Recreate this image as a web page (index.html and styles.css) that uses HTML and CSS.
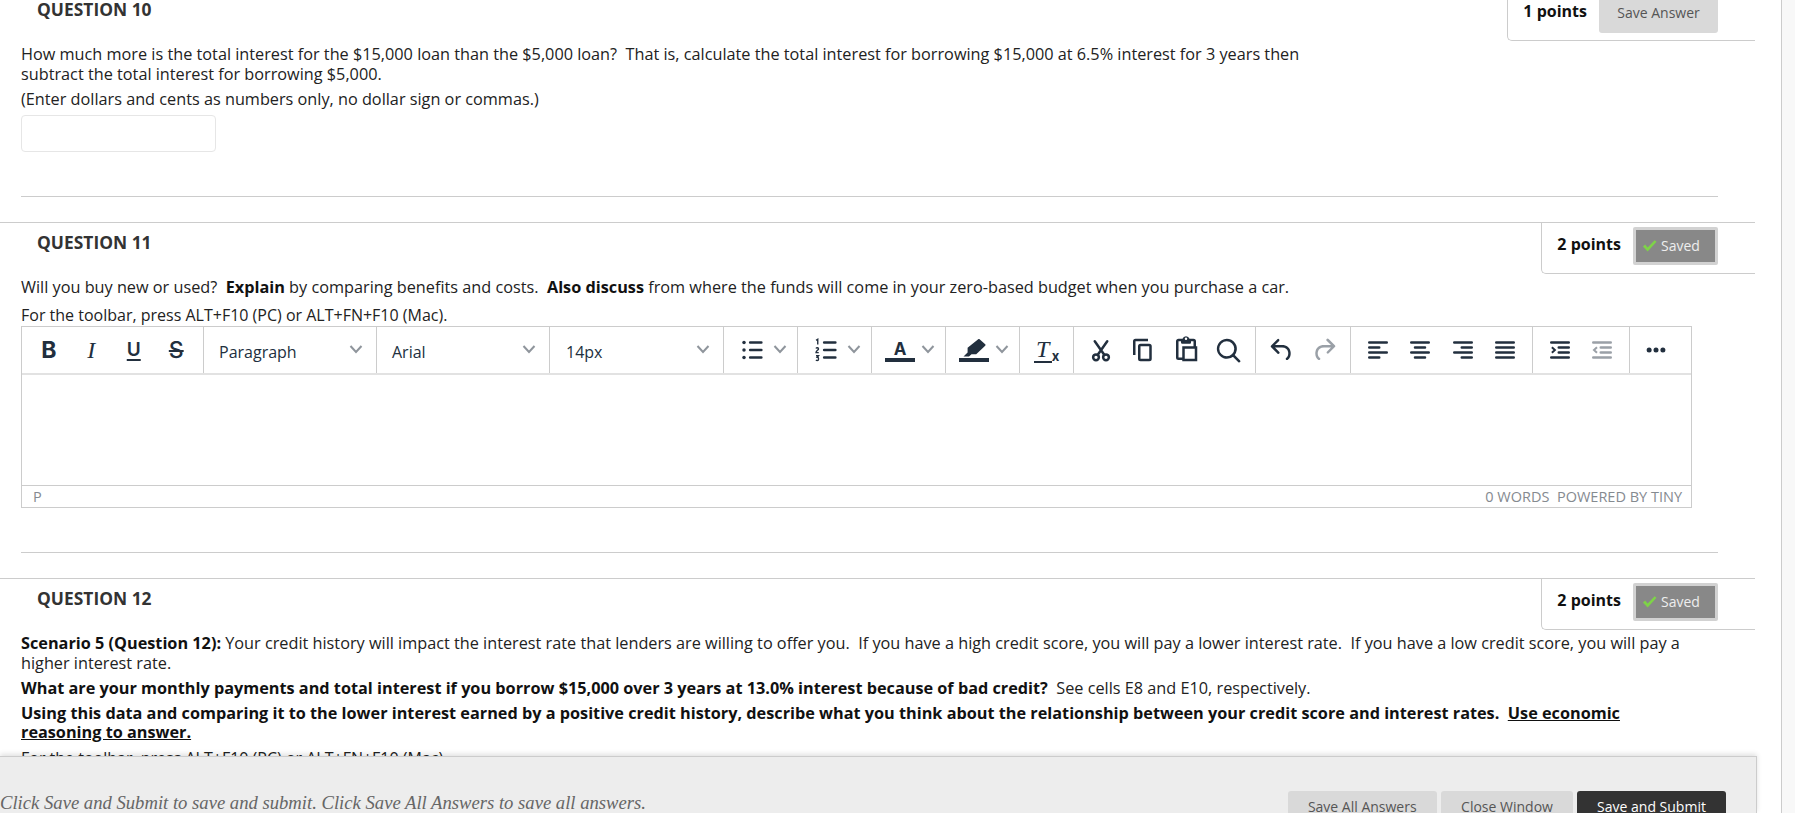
FILE: index.html
```html
<!DOCTYPE html>
<html lang="en">
<head>
<meta charset="utf-8">
<title>Take Test</title>
<link rel="stylesheet" href="styles.css">
</head>
<body>
<div class="shell">
  <main class="content">
    <section class="question">
      <header class="q-head">
        <h2 class="q-title">QUESTION 10</h2>
        <div class="points-box">
          <span class="points">1 points</span>
          <button class="save-btn">Save Answer</button>
        </div>
      </header>
      <div class="q-body">
        <p class="q-text">How much more is the total interest for the $15,000 loan than the $5,000 loan?&nbsp; That is, calculate the total interest for borrowing $15,000 at 6.5% interest for 3 years then<br>subtract the total interest for borrowing $5,000.</p>
        <p class="q-text">(Enter dollars and cents as numbers only, no dollar sign or commas.)</p>
        <input class="answer" type="text" aria-label="Answer">
      </div>
      <hr class="q-rule q-rule-10">
    </section>

    <section class="question">
      <header class="q-head">
        <h2 class="q-title">QUESTION 11</h2>
        <div class="points-box">
          <span class="points">2 points</span>
          <button class="saved-btn"><svg class="check" viewBox="0 0 16 16"><path d="M1 9l2.4-2 2.6 3L13.5 2.5 15.5 4 6 14.5z"/></svg>Saved</button>
        </div>
      </header>
      <div class="q-body">
        <p class="q-text q-text-gap">Will you buy new or used?&nbsp; <b>Explain</b> by comparing benefits and costs.&nbsp; <b>Also discuss</b> from where the funds will come in your zero-based budget when you purchase a car.</p>
        <p class="toolbar-hint">For the toolbar, press ALT+F10 (PC) or ALT+FN+F10 (Mac).</p>
        <div class="editor">
          <div class="toolbar">
            <div class="group g-format">
              <span class="tb tb-text t-b">B</span>
              <span class="tb tb-text t-i">I</span>
              <span class="tb tb-text t-u">U</span>
              <span class="tb tb-text t-s">S</span>
            </div>
            <div class="group g-select"><span class="sel-label">Paragraph</span><svg class="chev" viewBox="0 0 14 10"><path d="M1.5 2l5.5 6 5.5-6"/></svg></div>
            <div class="group g-select"><span class="sel-label">Arial</span><svg class="chev" viewBox="0 0 14 10"><path d="M1.5 2l5.5 6 5.5-6"/></svg></div>
            <div class="group g-select g-select-last"><span class="sel-label">14px</span><svg class="chev" viewBox="0 0 14 10"><path d="M1.5 2l5.5 6 5.5-6"/></svg></div>
            <div class="group g-split">
              <svg class="ic" viewBox="0 0 24 24"><circle cx="5.6" cy="6" r="1.4" class="f"/><circle cx="5.6" cy="12" r="1.4" class="f"/><circle cx="5.6" cy="18" r="1.4" class="f"/><path d="M10.5 6h9M10.5 12h9M10.5 18h9"/></svg>
              <svg class="chev" viewBox="0 0 14 10"><path d="M1.5 2l5.5 6 5.5-6"/></svg>
            </div>
            <div class="group g-split">
              <svg class="ic" viewBox="0 0 24 24"><path class="thin" d="M4 4.2l1.4-.8v4.2M4 10.8c.4-.8 2-.8 2 .3 0 .9-2 1.6-2 3h2.2M4 16.6h2l-1 1.2c1.4 0 1.4 2.6 0 2.6-.5 0-.8-.2-1-.5"/><path d="M10.5 6h9M10.5 12h9M10.5 18h9"/></svg>
              <svg class="chev" viewBox="0 0 14 10"><path d="M1.5 2l5.5 6 5.5-6"/></svg>
            </div>
            <div class="group g-split">
              <span class="color-ic"><span class="color-a">A</span></span>
              <svg class="chev" viewBox="0 0 14 10"><path d="M1.5 2l5.5 6 5.5-6"/></svg>
            </div>
            <div class="group g-split">
              <span class="color-ic"><svg class="marker" viewBox="0 0 24 18"><path d="M17.6 0.3l5.6 5a1 1 0 0 1 0 1.4L14.2 15.3H9.5L7 17.5H1.5L5.6 13.5V8.7L16.2 0.3a1 1 0 0 1 1.4 0z"/></svg></span>
              <svg class="chev" viewBox="0 0 14 10"><path d="M1.5 2l5.5 6 5.5-6"/></svg>
            </div>
            <div class="group g-clear"><span class="clear-ic"><span class="clear-t">T</span><span class="clear-x">x</span></span></div>
            <div class="group g-wide">
              <svg class="ic" viewBox="0 0 24 24"><circle cx="8" cy="17.8" r="2.3"/><circle cx="16" cy="17.8" r="2.3"/><path d="M9.4 15.8L17 5M14.6 15.8L7 5"/></svg>
              <svg class="ic" viewBox="0 0 24 24"><path class="f" d="M16 3H6a2 2 0 0 0-2 2v11h2V5h10V3zm1 4a2 2 0 0 1 2 2v10a2 2 0 0 1-2 2H10a2 2 0 0 1-2-2V9a2 2 0 0 1 2-2h7zm0 2H10v10h7V9z"/></svg>
              <svg class="ic" viewBox="0 0 24 24"><path class="f" d="M18 9V5h-2v1c0 .6-.4 1-1 1H9a1 1 0 0 1-1-1V5H6v13h3V9h9zM9 20H6a2 2 0 0 1-2-2V5c0-1.1.9-2 2-2h3.2A3 3 0 0 1 12 1a3 3 0 0 1 2.8 2H18a2 2 0 0 1 2 2v4h1v12H9v-1zm2-9v8h8v-8h-8zm1-7a1 1 0 0 0 0-2 1 1 0 0 0 0 2z"/></svg>
              <svg class="ic" viewBox="0 0 24 24"><path class="f" d="M16 17.3a8 8 0 1 1 1.4-1.4l4.3 4.4a1 1 0 0 1-1.4 1.4l-4.4-4.3zm-5-.3a6 6 0 1 0 0-12 6 6 0 0 0 0 12z"/></svg>
            </div>
            <div class="group g-undo">
              <svg class="ic" viewBox="0 0 24 24"><path class="f" d="M6.4 8H12c3.7 0 6.2 2 6.8 5.1.6 2.7-.4 5.6-2.3 6.8a1 1 0 0 1-1-1.8c1.1-.6 1.8-2.7 1.4-4.6-.5-2.1-2.1-3.5-4.9-3.5H6.4l3.3 3.3a1 1 0 1 1-1.4 1.4l-5-5a1 1 0 0 1 0-1.4l5-5a1 1 0 0 1 1.4 1.4L6.4 8z"/></svg>
              <svg class="ic off" viewBox="0 0 24 24"><path class="f" d="M17.6 10H12c-2.8 0-4.4 1.4-4.9 3.5-.4 2 .3 4 1.4 4.6a1 1 0 1 1-1 1.8c-2-1.2-2.9-4.1-2.3-6.8.6-3 3-5.1 6.8-5.1h5.6l-3.3-3.3a1 1 0 1 1 1.4-1.4l5 5a1 1 0 0 1 0 1.4l-5 5a1 1 0 0 1-1.4-1.4l3.3-3.3z"/></svg>
            </div>
            <div class="group g-wide">
              <svg class="ic" viewBox="0 0 24 24"><path d="M5 6h14M5 10h8M5 14h14M5 18h8"/></svg>
              <svg class="ic" viewBox="0 0 24 24"><path d="M5 6h14M8 10h8M5 14h14M8 18h8"/></svg>
              <svg class="ic" viewBox="0 0 24 24"><path d="M5 6h14M11 10h8M5 14h14M11 18h8"/></svg>
              <svg class="ic" viewBox="0 0 24 24"><path d="M5 6h14M5 10h14M5 14h14M5 18h14"/></svg>
            </div>
            <div class="group g-indent">
              <svg class="ic" viewBox="0 0 24 24"><path d="M5 6h14M11 10h8M11 14h8M5 18h14"/><path class="arrow" d="M5.5 9.8l2.4 2.2-2.4 2.2"/></svg>
              <svg class="ic off" viewBox="0 0 24 24"><path d="M5 6h14M11 10h8M11 14h8M5 18h14"/><path class="arrow" d="M8 9.8L5.6 12 8 14.2"/></svg>
            </div>
            <div class="group g-more">
              <svg class="ic" viewBox="0 0 24 24"><circle class="f" cx="6.5" cy="12" r="2"/><circle class="f" cx="12" cy="12" r="2"/><circle class="f" cx="17.5" cy="12" r="2"/></svg>
            </div>
          </div>
          <div class="edit-area"></div>
          <div class="statusbar"><span>P</span><span class="status-right">0 WORDS&nbsp; POWERED BY TINY</span></div>
        </div>
      </div>
      <hr class="q-rule q-rule-11">
    </section>

    <section class="question">
      <header class="q-head">
        <h2 class="q-title">QUESTION 12</h2>
        <div class="points-box">
          <span class="points">2 points</span>
          <button class="saved-btn"><svg class="check" viewBox="0 0 16 16"><path d="M1 9l2.4-2 2.6 3L13.5 2.5 15.5 4 6 14.5z"/></svg>Saved</button>
        </div>
      </header>
      <div class="q-body q-body-12">
        <p class="q-text"><b>Scenario 5 (Question 12):</b> Your credit history will impact the interest rate that lenders are willing to offer you.&nbsp; If you have a high credit score, you will pay a lower interest rate.&nbsp; If you have a low credit score, you will pay a<br>higher interest rate.</p>
        <p class="q-text"><b>What are your monthly payments and total interest if you borrow $15,000 over 3 years at 13.0% interest because of bad credit?</b>&nbsp; See cells E8 and E10, respectively.</p>
        <p class="q-text"><b>Using this data and comparing it to the lower interest earned by a positive credit history, describe what you think about the relationship between your credit score and interest rates.&nbsp; <u>Use economic<br>reasoning to answer.</u></b></p>
        <p class="toolbar-hint toolbar-hint-12">For the toolbar, press ALT+F10 (PC) or ALT+FN+F10 (Mac).</p>
      </div>
    </section>
  </main>
  <div class="rail"></div>
</div>

<footer class="submit-bar">
  <p class="submit-note">Click Save and Submit to save and submit. Click Save All Answers to save all answers.</p>
  <div class="submit-actions">
    <button class="foot-btn">Save All Answers</button>
    <button class="foot-btn">Close Window</button>
    <button class="foot-btn foot-primary">Save and Submit</button>
  </div>
</footer>
</body>
</html>
```

FILE: styles.css
```css
* { box-sizing: border-box; }
html, body { margin: 0; height: 100%; overflow: hidden; background: #fff; }
body { font-family: "Open Sans", "Liberation Sans", sans-serif; font-size: 16px; color: #222; }

.shell { display: flex; height: 813px; overflow: hidden; }
.content { width: 1781px; flex: none; margin-top: -11px; }
.rail { flex: 1; background: #f8f8f8; border-left: 1px solid #ccc; }

.question { border-top: 1px solid #ccc; margin-right: 26px; }
.question:first-child { border-top-color: transparent; }
.q-head { display: flex; justify-content: space-between; align-items: flex-start; height: 51px; }
.q-title { margin: 10px 0 0 37px; font-size: 17.4px; line-height: 18px; font-weight: 700; color: #333; }

.points-box { display: flex; align-items: flex-start; gap: 12px; height: 51px; padding: 0 37px 0 15px; border-left: 1px solid #ccc; border-bottom: 1px solid #ccc; border-bottom-left-radius: 5px; }
.points { margin-top: 11px; font-size: 16px; line-height: 20px; font-weight: 700; color: #111; }
.save-btn { width: 119px; height: 43px; margin: 0; border: 0; border-radius: 0 0 3px 3px; background: #d9d9d9; color: #555; font: 14px "Open Sans", sans-serif; padding: 1px 0 0; }
.saved-btn { display: flex; align-items: center; width: 85px; height: 38px; margin-top: 4px; padding: 0 0 0 6px; border: 3px solid #d2d2d2; border-radius: 2px; background: #888; color: #eee; font: 14px "Open Sans", sans-serif; }
.check { width: 15px; height: 15px; margin-right: 4px; fill: #7ed348; }

.q-body { margin-left: 21px; padding-top: 4px; }
.q-body-12 { padding-top: 4.5px; }
.q-text { margin: 0 0 5.5px; font-size: 16.25px; line-height: 19.5px; color: #222; }
.q-text b, .q-text u { color: #111; }
.q-text-gap { margin-bottom: 7.5px; }
.toolbar-hint { margin: 0; font-size: 16px; line-height: 20px; color: #222; }
.toolbar-hint-12 { margin-top: 1px; }
.answer { display: block; width: 195px; height: 37px; margin: 0.5px 0 0; border: 1px solid #e6e6e6; border-radius: 4px; background: #fff; }

.q-rule { margin: 0 0 25px 21px; width: 1697px; height: 1px; border: 0; background: #ccc; }
.q-rule-10 { margin-top: 44px; }
.q-rule-11 { margin-top: 44px; }

.editor { width: 1671px; margin-top: 1px; border: 1px solid #ccc; }
.toolbar { display: flex; height: 48px; border-bottom: 2px solid #e2e2e2; color: #222f3e; }
.group { display: flex; align-items: center; justify-content: center; height: 100%; border-right: 1px solid #ccc; flex: none; }
.group:last-child { border-right: 0; }
.g-format { width: 182px; }
.g-select { width: 173px; justify-content: space-between; padding: 0 13px 0 15px; }
.g-select-last { width: 174px; padding-left: 16px; }
.g-split { width: 74px; gap: 0; justify-content: flex-start; padding-left: 13px; }
.g-clear { width: 54px; }
.g-wide { width: 182px; }
.g-undo { width: 95px; }
.g-indent { width: 97px; }
.g-more { flex: 1; justify-content: flex-start; padding-left: 5px; }

.tb { width: 42.5px; text-align: center; }
.tb-text { font-size: 23px; line-height: 30px; color: #222f3e; }
.t-b { font-family: Inter, "Liberation Sans", sans-serif; font-weight: 700; }
.t-i { font-family: "Liberation Serif", serif; font-style: italic; font-size: 24px; }
.t-u { font-family: Inter, "Liberation Sans", sans-serif; font-weight: 600; font-size: 19px; text-decoration: underline; text-underline-offset: 3px; text-decoration-thickness: 2px; }
.t-s { font-family: Inter, "Liberation Sans", sans-serif; font-weight: 500; text-decoration: line-through; text-decoration-thickness: 2px; }

.sel-label { font-size: 16px; line-height: 20px; color: #222f3e; margin-top: 5px; }
.chev { width: 14px; height: 10px; flex: none; margin-top: -2px; fill: none; stroke: #8f959c; stroke-width: 2; }
.g-split .chev { margin-left: 6px; }

.ic { width: 30px; height: 30px; flex: none; margin: 0 6.25px; fill: none; stroke: #222f3e; stroke-width: 2; stroke-linecap: round; }
.g-split .ic { margin: 0; }
.ic .f { fill: #222f3e; stroke: none; }
.ic .thin { stroke-width: 1.1; stroke-linecap: butt; }
.ic .arrow { stroke-width: 1.6; stroke-linecap: butt; }
.ic.off { opacity: .45; }

.color-ic { display: flex; align-items: flex-end; justify-content: center; width: 30px; height: 24px; border-bottom: 4px solid #222f3e; flex: none; }
.color-a { font: 700 17px/18px Inter, "Liberation Sans", sans-serif; color: #222f3e; }
.marker { width: 24px; height: 18px; margin-bottom: 1px; fill: #222f3e; }

.clear-ic { display: flex; align-items: flex-end; }
.clear-t { font: italic 24px/24px "Liberation Serif", serif; width: 18px; text-align: center; border-bottom: 2px solid #222f3e; color: #222f3e; }
.clear-x { font: 700 13px/13px Inter, "Liberation Sans", sans-serif; color: #222f3e; }

.edit-area { height: 110px; }
.statusbar { display: flex; justify-content: space-between; align-items: center; height: 22px; padding: 0 9px 0 11px; border-top: 1px solid #ccc; font-size: 14.5px; color: #858a90; }

.submit-bar { position: absolute; left: 0; bottom: 0; display: flex; justify-content: space-between; align-items: flex-start; width: 1757px; height: 57px; background: #ededed; border-top: 1px solid #ccc; border-right: 1px solid #ccc; box-shadow: 0 -2px 5px rgba(0,0,0,.12); overflow: hidden; }
.submit-note { margin: 36px 0 0; font: italic 18.65px/20px "Liberation Serif", serif; color: #666; white-space: nowrap; }
.submit-actions { display: flex; gap: 4px; margin: 34px 30px 0 0; }
.foot-btn { height: 40px; padding: 0 0 10px; width: 149.5px; border: 0; border-radius: 3px; background: #d9d9d9; color: #555; font: 14px "Open Sans", sans-serif; }
.foot-btn + .foot-btn { width: 132px; }
.foot-btn.foot-primary { width: 149px; background: #333; color: #fff; }
```
